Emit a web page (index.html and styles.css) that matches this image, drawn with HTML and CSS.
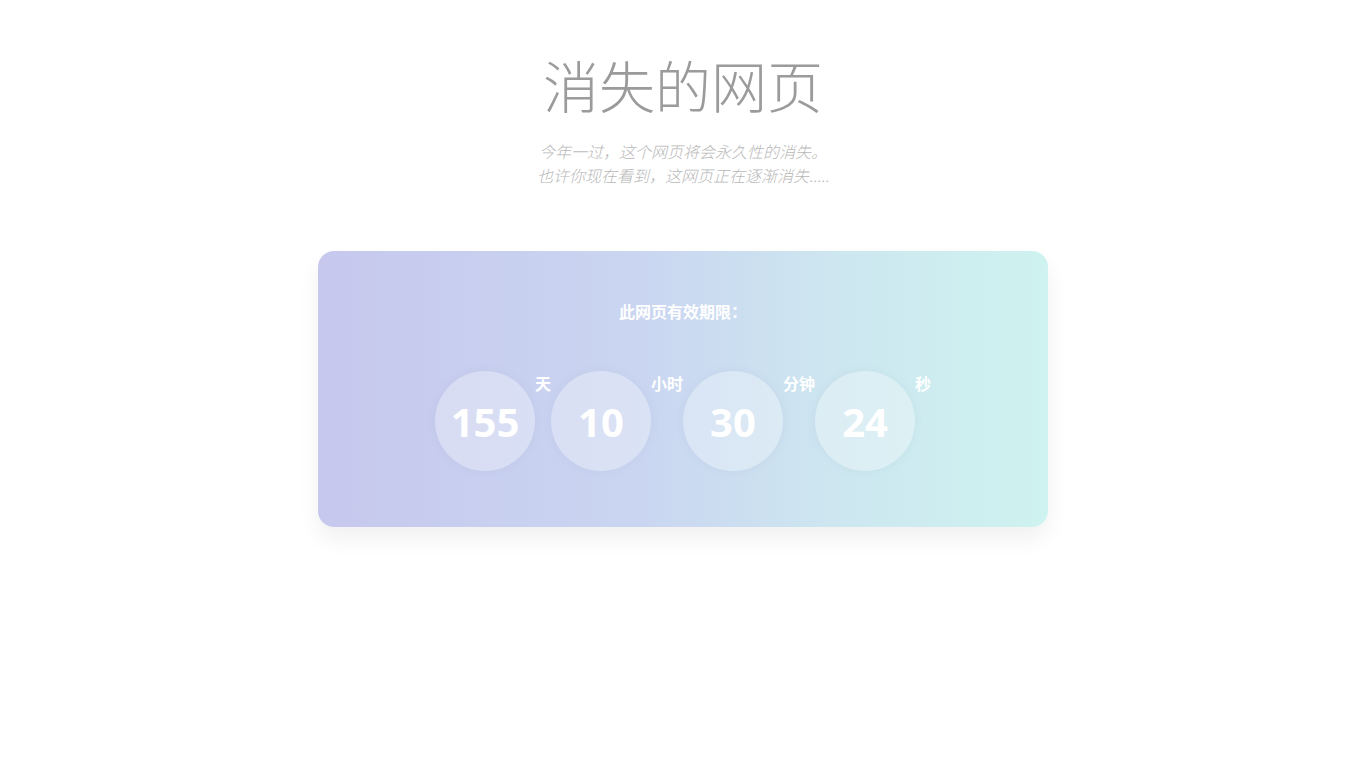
FILE: index.html
```html
<!DOCTYPE html>
<html lang="zh-CN">
<head>
<meta charset="utf-8">
<title>消失的网页</title>
<link rel="stylesheet" href="styles.css">
</head>
<body>
<main class="page">
  <header class="head">
    <h1 class="title">消失的网页</h1>
    <p class="sub">今年一过，这个网页将会永久性的消失。<br>也许你现在看到，这网页正在逐渐消失.....</p>
  </header>
  <section class="card">
    <div class="label">此网页有效期限：</div>
    <div class="timer">
      <div class="circle">155</div><span class="unit">天</span>
      <div class="circle">10</div><span class="unit">小时</span>
      <div class="circle">30</div><span class="unit">分钟</span>
      <div class="circle">24</div><span class="unit">秒</span>
    </div>
  </section>
</main>
</body>
</html>
```
FILE: styles.css
```css
html, body {
  margin: 0;
  padding: 0;
  background: #ffffff;
  min-height: 100%;
}
body {
  font-family: "Noto Sans", "Noto Sans CJK SC", sans-serif;
}
.page {
  display: flex;
  flex-direction: column;
  align-items: center;
  padding-bottom: 120px;
}
.head {
  text-align: center;
  padding-top: 42px;
}
.title {
  margin: 0;
  font-family: "Noto Sans CJK SC", sans-serif;
  font-weight: 300;
  font-size: 56px;
  line-height: 84px;
  color: #9b9b9b;
}
.sub {
  margin: 13px 0 0;
  font-family: "Noto Sans CJK SC", sans-serif;
  font-style: italic;
  font-weight: 300;
  font-size: 16px;
  line-height: 24px;
  color: #b8b8b8;
}
.card {
  margin-top: 64px;
  width: 730px;
  height: 276px;
  box-sizing: border-box;
  border-radius: 16px;
  background: linear-gradient(to right, #c6c8ed 0%, #cad6f1 45%, #cde6f0 70%, #cef3f0 100%);
  box-shadow: 0 12px 22px rgba(0, 0, 0, 0.06);
  padding-top: 48px;
  display: flex;
  flex-direction: column;
  align-items: center;
}
.label {
  font-family: "Noto Sans CJK SC", sans-serif;
  font-weight: 700;
  font-size: 16px;
  line-height: 24px;
  color: #ffffff;
}
.timer {
  margin-top: 48px;
  display: flex;
  align-items: flex-start;
}
.circle {
  width: 100px;
  height: 100px;
  border-radius: 50%;
  background: rgba(255, 255, 255, 0.3);
  box-shadow: 0 0 10px rgba(120, 130, 170, 0.08);
  display: flex;
  align-items: center;
  justify-content: center;
  font-family: "Noto Sans", sans-serif;
  font-weight: 700;
  font-size: 40px;
  color: #ffffff;
}
.unit {
  font-family: "Noto Sans CJK SC", sans-serif;
  font-weight: 700;
  font-size: 16px;
  line-height: 24px;
  color: #ffffff;
}
```
